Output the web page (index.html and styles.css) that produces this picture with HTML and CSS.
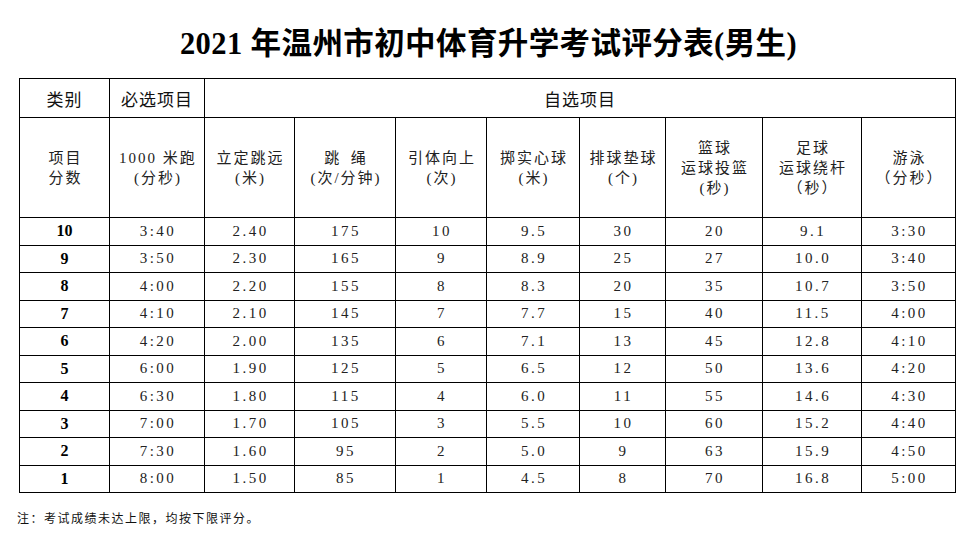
FILE: index.html
```html
<!DOCTYPE html>
<html lang="zh-CN">
<head>
<meta charset="utf-8">
<title>2021年温州市初中体育升学考试评分表(男生)</title>
<link rel="stylesheet" href="styles.css">
</head>
<body>
<div class="page">
  <h1 class="title">2021 年温州市初中体育升学考试评分表(男生)</h1>
  <table class="score">
    <colgroup>
      <col class="c1"><col class="c2"><col class="c3"><col class="c4"><col class="c5">
      <col class="c6"><col class="c7"><col class="c8"><col class="c9"><col class="c10">
    </colgroup>
    <thead>
      <tr class="cat">
        <th>类别</th>
        <th>必选项目</th>
        <th colspan="8">自选项目</th>
      </tr>
      <tr class="items">
        <th>项目<br>分数</th>
        <th>1000 米跑<br>(分秒)</th>
        <th>立定跳远<br>(米)</th>
        <th>跳&ensp;绳<br>(次/分钟)</th>
        <th>引体向上<br>(次)</th>
        <th>掷实心球<br>(米)</th>
        <th>排球垫球<br>(个)</th>
        <th>篮球<br>运球投篮<br>(秒)</th>
        <th>足球<br>运球绕杆<br>（秒）</th>
        <th>游泳<br>（分秒）</th>
      </tr>
    </thead>
    <tbody>
      <tr><td class="pt">10</td><td>3:40</td><td>2.40</td><td>175</td><td>10</td><td>9.5</td><td>30</td><td>20</td><td>9.1</td><td>3:30</td></tr>
      <tr><td class="pt">9</td><td>3:50</td><td>2.30</td><td>165</td><td>9</td><td>8.9</td><td>25</td><td>27</td><td>10.0</td><td>3:40</td></tr>
      <tr><td class="pt">8</td><td>4:00</td><td>2.20</td><td>155</td><td>8</td><td>8.3</td><td>20</td><td>35</td><td>10.7</td><td>3:50</td></tr>
      <tr><td class="pt">7</td><td>4:10</td><td>2.10</td><td>145</td><td>7</td><td>7.7</td><td>15</td><td>40</td><td>11.5</td><td>4:00</td></tr>
      <tr><td class="pt">6</td><td>4:20</td><td>2.00</td><td>135</td><td>6</td><td>7.1</td><td>13</td><td>45</td><td>12.8</td><td>4:10</td></tr>
      <tr><td class="pt">5</td><td>6:00</td><td>1.90</td><td>125</td><td>5</td><td>6.5</td><td>12</td><td>50</td><td>13.6</td><td>4:20</td></tr>
      <tr><td class="pt">4</td><td>6:30</td><td>1.80</td><td>115</td><td>4</td><td>6.0</td><td>11</td><td>55</td><td>14.6</td><td>4:30</td></tr>
      <tr><td class="pt">3</td><td>7:00</td><td>1.70</td><td>105</td><td>3</td><td>5.5</td><td>10</td><td>60</td><td>15.2</td><td>4:40</td></tr>
      <tr><td class="pt">2</td><td>7:30</td><td>1.60</td><td>95</td><td>2</td><td>5.0</td><td>9</td><td>63</td><td>15.9</td><td>4:50</td></tr>
      <tr><td class="pt">1</td><td>8:00</td><td>1.50</td><td>85</td><td>1</td><td>4.5</td><td>8</td><td>70</td><td>16.8</td><td>5:00</td></tr>
    </tbody>
  </table>
  <p class="note">注：考试成绩未达上限，均按下限评分。</p>
</div>
</body>
</html>
```
FILE: styles.css
```css
html, body {
  margin: 0;
  padding: 0;
  background: #fff;
  color: #000;
}

.page {
  width: 977px;
  height: 548px;
  overflow: hidden;
  font-family: "Liberation Serif", "Noto Sans CJK SC", serif;
}

.title {
  margin: 0 0 16px 0;
  padding: 26px 0 0 0;
  height: 36px;
  line-height: 36px;
  font-size: 30.5px;
  letter-spacing: 0.4px;
  font-weight: bold;
  text-align: center;
  font-family: "Liberation Serif", "Noto Sans CJK SC", serif;
}

.score {
  margin-left: 19px;
  width: 936px;
  border-collapse: collapse;
  table-layout: fixed;
  border: 1px solid #000;
}

.c1 { width: 90px; }
.c2 { width: 95px; }
.c3 { width: 90px; }
.c4 { width: 101px; }
.c5 { width: 91px; }
.c6 { width: 93px; }
.c7 { width: 86px; }
.c8 { width: 97px; }
.c9 { width: 99px; }
.c10 { width: 94px; }

.score th,
.score td {
  border: 1px solid #000;
  padding: 0;
  text-align: center;
  vertical-align: middle;
}

.cat th {
  height: 38px;
  font-family: "Noto Sans CJK SC", sans-serif;
  font-size: 17px;
  font-weight: normal;
  letter-spacing: 1px;
  color: #111;
}

.items th {
  height: 99px;
  font-size: 15px;
  line-height: 20px;
  font-weight: normal;
  letter-spacing: 2px;
  color: #222;
  padding-left: 2px;
}

.score td {
  height: 26.5px;
  font-size: 15px;
  letter-spacing: 2.5px;
  padding-left: 2px;
  color: #222;
}

.score td.pt {
  font-weight: bold;
  font-size: 16px;
  letter-spacing: 0;
  padding-left: 0;
  color: #000;
}

.note {
  margin: 16px 0 0 17px;
  font-family: "Noto Sans CJK SC", sans-serif;
  font-size: 12px;
  line-height: 18px;
  letter-spacing: 1.5px;
  color: #111;
}
```
